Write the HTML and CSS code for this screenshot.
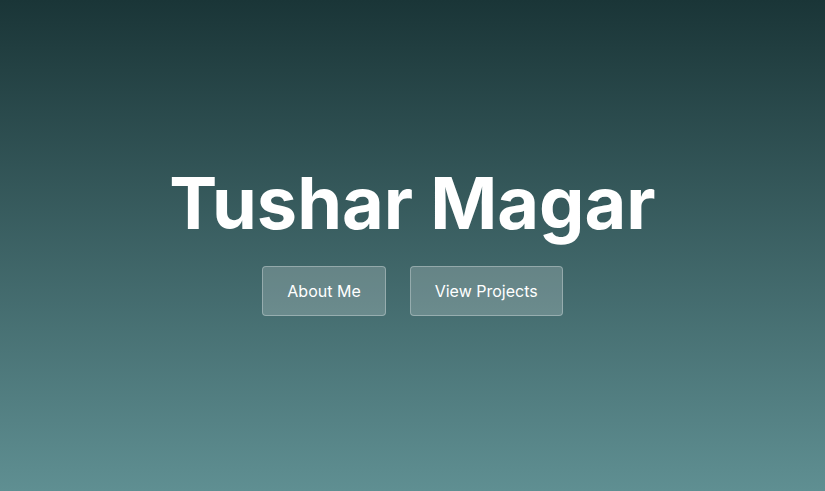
FILE: index.html
```html
<!DOCTYPE html>
<html lang="en">
<head>
<meta charset="utf-8">
<title>Tushar Magar</title>
<link rel="stylesheet" href="styles.css">
</head>
<body>
<main class="hero">
  <h1 class="hero-title">Tushar Magar</h1>
  <div class="hero-actions">
    <a class="btn" href="#about">About Me</a>
    <a class="btn" href="#projects">View Projects</a>
  </div>
</main>
</body>
</html>
```
FILE: styles.css
```css
html, body {
  margin: 0;
  padding: 0;
  height: 100%;
}
body {
  font-family: Inter, "Noto Sans", sans-serif;
  background: linear-gradient(to bottom, #1a3537 0%, #5f8f92 100%);
  color: #fff;
}
.hero {
  box-sizing: border-box;
  height: 100%;
  padding-bottom: 15px;
  display: flex;
  flex-direction: column;
  align-items: center;
  justify-content: center;
}
.hero-title {
  margin: 0 0 20px;
  font-size: 72px;
  font-weight: 700;
  line-height: 1.2;
}
.hero-actions {
  display: flex;
  gap: 24px;
}
.btn {
  display: inline-block;
  padding: 12px 24px;
  font-size: 16px;
  line-height: 24px;
  color: #fff;
  text-decoration: none;
  background: rgba(255, 255, 255, 0.2);
  border: 1px solid rgba(255, 255, 255, 0.3);
  border-radius: 4px;
}
```
